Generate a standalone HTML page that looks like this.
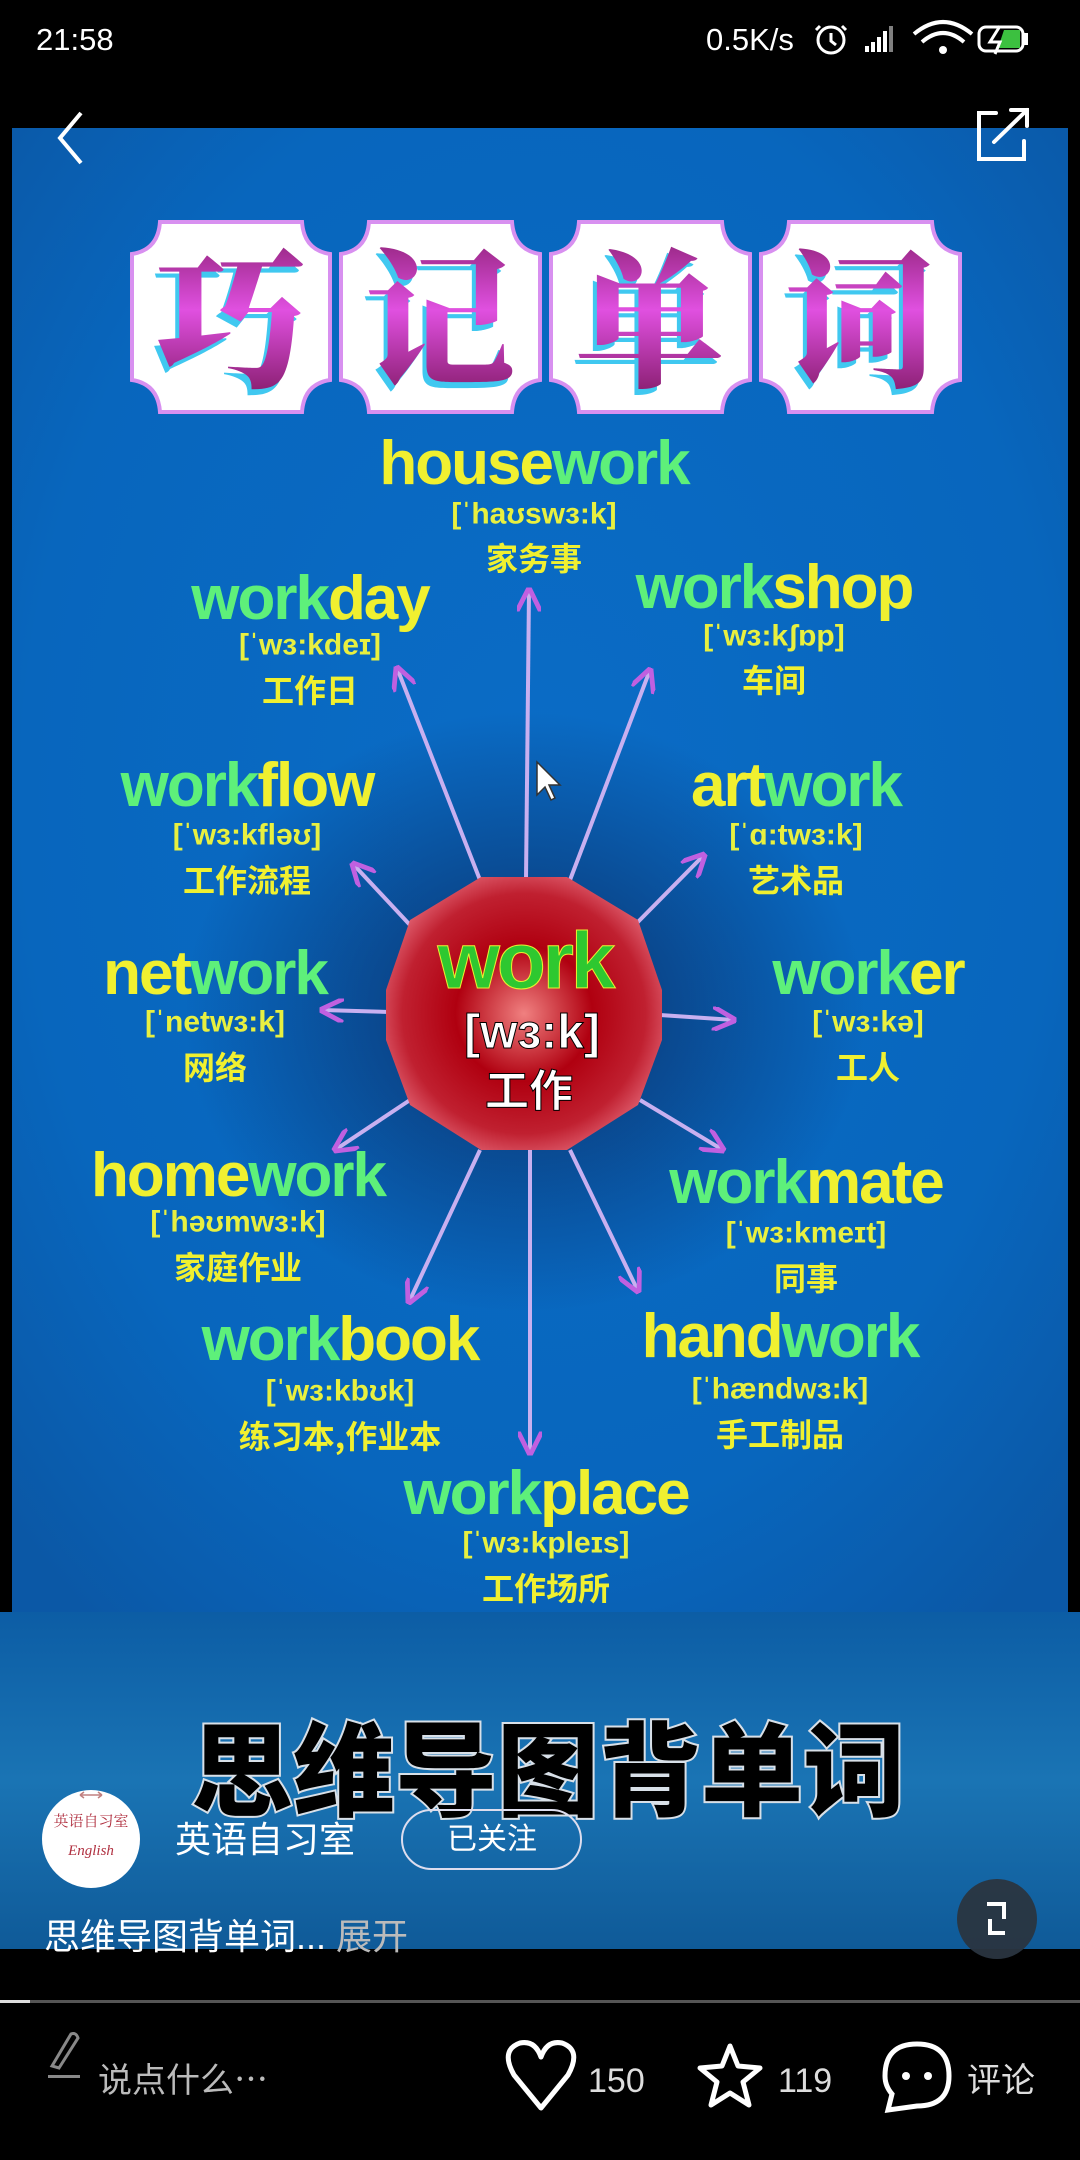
<!DOCTYPE html>
<html><head><meta charset="utf-8"><style>
html,body{margin:0;padding:0;background:#000;}
body{width:1080px;height:2160px;position:relative;overflow:hidden;font-family:"Liberation Sans","Noto Sans CJK SC",sans-serif;color:#fff;}
.abs{position:absolute;}
</style></head><body>
<svg class="abs" style="left:0;top:0" width="1080" height="2160" viewBox="0 0 1080 2160">
<defs>
<radialGradient id="bg" cx="0.5" cy="0.45" r="0.7">
<stop offset="0" stop-color="#0a6cc6"/><stop offset="0.7" stop-color="#0866bd"/><stop offset="1" stop-color="#0b58a6"/>
</radialGradient>
<radialGradient id="oct" cx="0.5" cy="0.5" r="0.55">
<stop offset="0" stop-color="#f08080"/><stop offset="0.45" stop-color="#b00010"/><stop offset="0.8" stop-color="#c02030"/><stop offset="1" stop-color="#e06070"/>
</radialGradient>
<radialGradient id="halo" cx="0.5" cy="0.5" r="0.5">
<stop offset="0" stop-color="#0a2a60" stop-opacity="0.9"/><stop offset="1" stop-color="#0a2a60" stop-opacity="0"/>
</radialGradient>
<linearGradient id="band" x1="0" y1="0" x2="0" y2="1">
<stop offset="0" stop-color="#0c5da5"/><stop offset="0.5" stop-color="#1a74b4"/><stop offset="1" stop-color="#0f5a98"/>
</linearGradient>
<linearGradient id="mag" x1="0" y1="0" x2="0" y2="1">
<stop offset="0" stop-color="#701050"/><stop offset="0.5" stop-color="#e050e0"/><stop offset="1" stop-color="#701050"/>
</linearGradient>
<marker id="ah" viewBox="0 0 10 10" refX="9" refY="5" markerWidth="6" markerHeight="6" orient="auto"><path d="M0 0 L10 5 L0 10" fill="none" stroke="#c060e0" stroke-width="2"/></marker>
</defs>
<rect x="12" y="128" width="1056" height="1484" fill="url(#bg)"/>
<ellipse cx="525" cy="1012" rx="340" ry="300" fill="url(#halo)"/>
<rect x="0" y="1612" width="1080" height="337" fill="url(#band)"/>
<g fill="#fff" stroke="#d890f0" stroke-width="4">
<path d="M160 222 H302 Q304 250 330 254 V380 Q304 384 302 412 H160 Q158 384 132 380 V254 Q158 250 160 222Z"/>
<path d="M369 222 H512 Q514 250 540 254 V380 Q514 384 512 412 H369 Q367 384 341 380 V254 Q367 250 369 222Z"/>
<path d="M579 222 H722 Q724 250 750 254 V380 Q724 384 722 412 H579 Q577 384 551 380 V254 Q577 250 579 222Z"/>
<path d="M789 222 H932 Q934 250 960 254 V380 Q934 384 932 412 H789 Q787 384 761 380 V254 Q787 250 789 222Z"/>
</g>
<g font-family="'Noto Serif CJK SC','Noto Sans CJK SC',serif" font-weight="900" font-size="150" text-anchor="middle">
<g fill="#40c8f0" transform="translate(-4,6)">
<text x="231" y="375">巧</text><text x="440" y="375">记</text><text x="650" y="375">单</text><text x="860" y="375">词</text></g>
<g fill="url(#mag)">
<text x="231" y="375">巧</text><text x="440" y="375">记</text><text x="650" y="375">单</text><text x="860" y="375">词</text></g>
</g>
<g stroke="#c8b0f0" stroke-width="4" fill="none" marker-end="url(#ah)">
<line x1="526" y1="880" x2="529" y2="590"/>
<line x1="480" y1="880" x2="397" y2="668"/>
<line x1="570" y1="880" x2="650" y2="670"/>
<line x1="410" y1="925" x2="353" y2="864"/>
<line x1="630" y1="930" x2="704" y2="855"/>
<line x1="390" y1="1012" x2="322" y2="1010"/>
<line x1="660" y1="1015" x2="734" y2="1020"/>
<line x1="410" y1="1100" x2="335" y2="1150"/>
<line x1="640" y1="1100" x2="723" y2="1150"/>
<line x1="480" y1="1150" x2="409" y2="1302"/>
<line x1="570" y1="1150" x2="638" y2="1291"/>
<line x1="530" y1="1150" x2="530" y2="1453"/>
</g>
<polygon points="481,877 567,877 638,920 662,990 662,1040 638,1105 567,1150 481,1150 410,1105 386,1040 386,990 410,920" fill="url(#oct)"/>
<g text-anchor="middle" font-family="'Liberation Sans','Noto Sans CJK SC',sans-serif" font-weight="bold">
<text x="525" y="988" font-size="80" fill="#2ec830" stroke="#e8f030" stroke-width="1" letter-spacing="-3">work</text>
<text x="532" y="1048" font-size="48" fill="#fff" stroke="#000" stroke-width="1">[wɜ:k]</text>
<text x="529" y="1106" font-size="44" fill="#fff" stroke="#000" stroke-width="1">工作</text>
</g>
<g text-anchor="middle" font-weight="bold" dominant-baseline="central">
<g font-size="62" letter-spacing="-2" font-family="'Liberation Sans',sans-serif">
<text x="534" y="463"><tspan fill="#f0f030">house</tspan><tspan fill="#5ef07a">work</tspan></text>
<text x="310" y="598"><tspan fill="#5ef07a">work</tspan><tspan fill="#f0f030">day</tspan></text>
<text x="774" y="587"><tspan fill="#5ef07a">work</tspan><tspan fill="#f0f030">shop</tspan></text>
<text x="247" y="785"><tspan fill="#5ef07a">work</tspan><tspan fill="#f0f030">flow</tspan></text>
<text x="796" y="785"><tspan fill="#f0f030">art</tspan><tspan fill="#5ef07a">work</tspan></text>
<text x="215" y="973"><tspan fill="#f0f030">net</tspan><tspan fill="#5ef07a">work</tspan></text>
<text x="868" y="973"><tspan fill="#5ef07a">work</tspan><tspan fill="#f0f030">er</tspan></text>
<text x="238" y="1175"><tspan fill="#f0f030">home</tspan><tspan fill="#5ef07a">work</tspan></text>
<text x="806" y="1182"><tspan fill="#5ef07a">work</tspan><tspan fill="#f0f030">mate</tspan></text>
<text x="340" y="1339"><tspan fill="#5ef07a">work</tspan><tspan fill="#f0f030">book</tspan></text>
<text x="780" y="1336"><tspan fill="#f0f030">hand</tspan><tspan fill="#5ef07a">work</tspan></text>
<text x="546" y="1493"><tspan fill="#5ef07a">work</tspan><tspan fill="#f0f030">place</tspan></text>
</g>
<g font-size="30" fill="#e8f040" font-family="'Liberation Sans',sans-serif">
<text x="534" y="514">[ˈhaʊswɜ:k]</text>
<text x="310" y="645">[ˈwɜ:kdeɪ]</text>
<text x="774" y="636">[ˈwɜ:kʃɒp]</text>
<text x="247" y="835">[ˈwɜ:kfləʊ]</text>
<text x="796" y="835">[ˈɑ:twɜ:k]</text>
<text x="215" y="1022">[ˈnetwɜ:k]</text>
<text x="868" y="1022">[ˈwɜ:kə]</text>
<text x="238" y="1222">[ˈhəʊmwɜ:k]</text>
<text x="806" y="1233">[ˈwɜ:kmeɪt]</text>
<text x="340" y="1391">[ˈwɜ:kbʊk]</text>
<text x="780" y="1389">[ˈhændwɜ:k]</text>
<text x="546" y="1543">[ˈwɜ:kpleɪs]</text>
</g>
<g font-size="32" fill="#f0f030" font-family="'Noto Sans CJK SC',sans-serif">
<text x="534" y="557">家务事</text>
<text x="310" y="689">工作日</text>
<text x="774" y="679">车间</text>
<text x="247" y="879">工作流程</text>
<text x="796" y="879">艺术品</text>
<text x="215" y="1066">网络</text>
<text x="868" y="1066">工人</text>
<text x="238" y="1266">家庭作业</text>
<text x="806" y="1277">同事</text>
<text x="340" y="1435">练习本,作业本</text>
<text x="780" y="1433">手工制品</text>
<text x="546" y="1587">工作场所</text>
</g>
</g>
<text x="548" y="1808" text-anchor="middle" font-family="'Noto Sans CJK SC',sans-serif" font-weight="900" font-size="102" fill="#000" stroke="#d8e0e8" stroke-width="4" paint-order="stroke">思维导图背单词</text>
<path d="M537 762 L537 795 L545 787 L551 800 L555 798 L549 785 L560 785 Z" fill="#fff" stroke="#333" stroke-width="1.5"/>
<text x="36" y="50" font-size="31" fill="#fff" font-family="'Liberation Sans',sans-serif">21:58</text>
<text x="706" y="50" font-size="31" fill="#fff" font-family="'Liberation Sans',sans-serif">0.5K/s</text>
<g stroke="#fff" stroke-width="3" fill="none">
<circle cx="831" cy="40" r="13"/><path d="M831 33 V41 L836 45"/>
<path d="M820 26 l-4 4 M842 26 l4 4"/>
</g>
<g fill="#fff"><rect x="865" y="46" width="4" height="6"/><rect x="871" y="42" width="4" height="10"/><rect x="877" y="37" width="4" height="15"/><rect x="883" y="31" width="4" height="21"/><rect x="889" y="26" width="4" height="26" opacity="0.5"/></g>
<g fill="none" stroke="#fff" stroke-width="4"><path d="M914 34 Q943 10 972 34"/><path d="M922 42 Q943 24 964 42"/></g>
<circle cx="943" cy="50" r="4" fill="#fff"/>
<rect x="979" y="27" width="44" height="24" rx="7" fill="none" stroke="#fff" stroke-width="3"/>
<rect x="1024" y="33" width="4" height="12" fill="#fff"/>
<path d="M1004 30 H1020 V48 H998 Z" fill="#3cc040"/>
<path d="M1000 26 L990 42 H1000 L995 54" stroke="#fff" stroke-width="3" fill="none"/>
<path d="M81 113 L60 138 L81 163" stroke="#fff" stroke-width="4" fill="none"/>
<g stroke="#fff" stroke-width="4" fill="none" stroke-linecap="round">
<path d="M996 113 H979 V159 H1024 V141"/><path d="M994 142 L1027 110 M1011 110 H1027 V126"/>
</g>
<ellipse cx="91" cy="1839" rx="49" ry="49" fill="#fff"/>
<path d="M80 1795 H102 M80 1795 l4 -3 M80 1795 l4 3 M102 1795 l-4 -3 M102 1795 l-4 3" stroke="#c08080" stroke-width="1.5" fill="none"/>
<text x="91" y="1826" text-anchor="middle" font-size="15" fill="#b03040" font-family="'Noto Serif CJK SC',serif">英语自习室</text>
<text x="91" y="1855" text-anchor="middle" font-size="15" font-style="italic" fill="#b03040" font-family="'Liberation Serif',serif">English</text>
<text x="175" y="1852" font-size="36" fill="#fff" font-family="'Liberation Sans','Noto Sans CJK SC',sans-serif">英语自习室</text>
<rect x="402" y="1810" width="179" height="59" rx="29.5" fill="none" stroke="#dde" stroke-width="2"/>
<text x="492" y="1849" text-anchor="middle" font-size="30" fill="#fff" font-family="'Noto Sans CJK SC',sans-serif">已关注</text>
<rect x="0" y="1949" width="1080" height="211" fill="#000"/>
<text x="44" y="1949" font-size="36" fill="#fff" font-family="'Liberation Sans','Noto Sans CJK SC',sans-serif">思维导图背单词... <tspan fill="#bbb">展开</tspan></text>
<ellipse cx="997" cy="1919" rx="40" ry="40" fill="#2a3540" opacity="0.95"/>
<path d="M987 1904 H1004 V1919 M990 1919 V1933 H1005" stroke="#fff" stroke-width="4" fill="none"/>
<rect x="0" y="2000" width="1080" height="3" fill="#555"/>
<rect x="0" y="2000" width="30" height="3" fill="#ddd"/>
<path d="M52 2066 L71 2034 Q76 2032 78 2038 L59 2068 Z" stroke="#888" stroke-width="3" fill="none"/>
<rect x="48" y="2075" width="32" height="3" fill="#888"/>
<text x="98" y="2092" font-size="34" fill="#bbb" font-family="'Noto Sans CJK SC',sans-serif">说点什么…</text>
<path d="M541 2108 L514 2075 Q500 2050 520 2043 Q535 2040 541 2057 Q547 2040 562 2043 Q582 2050 568 2075 Z" stroke="#fff" stroke-width="5" fill="none" stroke-linejoin="round"/>
<text x="588" y="2092" font-size="34" fill="#ddd" font-family="'Liberation Sans',sans-serif">150</text>
<path d="M730 2046 L738 2066 L760 2068 L743 2082 L749 2105 L730 2093 L711 2105 L717 2082 L700 2068 L722 2066 Z" stroke="#fff" stroke-width="5" fill="none" stroke-linejoin="round"/>
<text x="778" y="2092" font-size="34" fill="#ddd" font-family="'Liberation Sans',sans-serif">119</text>
<path d="M917 2044 Q949 2044 949 2076 Q949 2106 917 2106 L888 2110 L892 2094 Q885 2086 885 2076 Q885 2044 917 2044Z" stroke="#fff" stroke-width="5" fill="none"/>
<circle cx="906" cy="2076" r="4" fill="#fff"/><circle cx="928" cy="2076" r="4" fill="#fff"/>
<text x="967" y="2092" font-size="34" fill="#ddd" font-family="'Noto Sans CJK SC',sans-serif">评论</text>
</svg>
</body></html>
